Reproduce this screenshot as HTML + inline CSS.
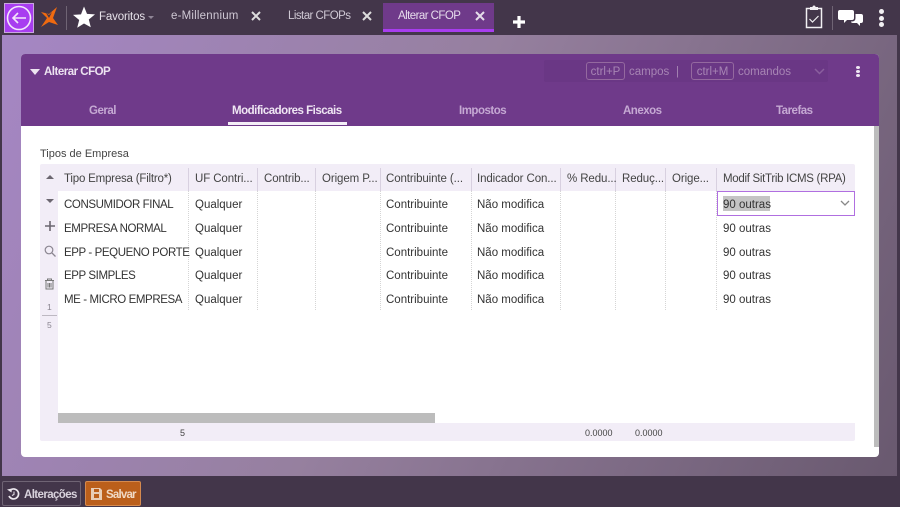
<!DOCTYPE html>
<html><head><meta charset="utf-8">
<style>
html,body{margin:0;padding:0;width:900px;height:507px;overflow:hidden;background:#43364a}
*{box-sizing:border-box}
body{font-family:"Liberation Sans",sans-serif;font-size:11.5px;color:#333;position:relative}
.a{position:absolute;white-space:nowrap}
.bg{position:absolute;left:2px;top:35px;width:895px;height:441px;background:linear-gradient(115deg,#a586c4 0%,#96809f 45%,#69596f 100%)}
.tab{color:#cfc8d4;font-size:11.5px;letter-spacing:-.55px;margin-top:1px}
.nav{color:#c5a9d3;font-weight:bold;font-size:11.5px;letter-spacing:-.5px;margin-top:1px}
.h{color:#444;font-size:11.5px;letter-spacing:-.1px;margin-top:1px}
.c{color:#333;font-size:11.5px;margin-top:1px}
.u{color:#333;font-size:11.5px;letter-spacing:-.4px;margin-top:1px}
.sep{position:absolute;top:168px;height:23px;width:1px;background:#d8d0e0}
.dot{position:absolute;top:191px;height:119px;width:0;border-left:1px dotted #d5d5d5}
.key{position:absolute;top:62px;height:18px;border:1px solid #94699f;border-radius:3px;color:#a785b4;font-size:11.5px;line-height:18px;text-align:center}
</style></head><body>
<div class="bg"></div>

<!-- top bar -->
<div class="a" style="left:4px;top:3px;width:30px;height:30px;background:#a83df0;border:1px solid #c9a6e0"></div>
<svg class="a" style="left:4px;top:3px" width="30" height="30" viewBox="0 0 30 30"><circle cx="15" cy="15" r="11.5" fill="none" stroke="#f3e6fb" stroke-width="1.6"/><path d="M22 15H9M14 10l-5 5 5 5" fill="none" stroke="#f3e6fb" stroke-width="1.6"/></svg>
<svg class="a" style="left:40px;top:6px" width="19" height="22" viewBox="0 0 19 22"><path d="M17 1 9 8 1 6l6 6-6 9 8-5 9 3-5-7z" fill="#f06a10"/><path d="M6 7 9 9 12 6 9 12z" fill="#43364a"/></svg>
<div class="a" style="left:66px;top:6px;width:1px;height:24px;background:#6f6474"></div>
<svg class="a" style="left:73px;top:6px" width="22" height="22" viewBox="0 0 22 22"><path d="M11 .5l3 7.4 8 .5-6.2 5.1 2 7.8L11 17.500 4.200 21.800l2-7.800L0 8.900l8-.5z" fill="#fff"/></svg>
<div class="a" style="left:99px;top:11px;color:#e6e1e9;font-size:11.5px;letter-spacing:-.15px">Favoritos</div>
<div class="a" style="left:148px;top:16px;width:0;height:0;border:3px solid transparent;border-top-color:#8f8596"></div>
<div class="a tab" style="left:171px;top:9px;letter-spacing:.2px">e-Millennium</div>
<div class="a" style="left:383px;top:3px;width:111px;height:29px;background:#6f3a8a;border-bottom:3px solid #a83df0"></div>
<div class="a tab" style="left:288px;top:9px">Listar CFOPs</div>
<div class="a tab" style="left:398px;top:9px;color:#e6dcec">Alterar CFOP</div>
<svg class="a" style="left:251px;top:11px" width="10" height="10"><path d="M1 1l8 8M9 1l-8 8" stroke="#ddd" stroke-width="2"/></svg>
<svg class="a" style="left:362px;top:11px" width="10" height="10"><path d="M1 1l8 8M9 1l-8 8" stroke="#ddd" stroke-width="2"/></svg>
<svg class="a" style="left:475px;top:11px" width="10" height="10"><path d="M1 1l8 8M9 1l-8 8" stroke="#e5dcea" stroke-width="2"/></svg>
<svg class="a" style="left:512px;top:15px" width="14" height="14"><path d="M7 1v12M1 7h12" stroke="#fff" stroke-width="3.200"/></svg>
<svg class="a" style="left:805px;top:5px" width="18" height="24" viewBox="0 0 18 24"><rect x="1.500" y="3.500" width="15" height="19" fill="none" stroke="#f2f0f3" stroke-width="1.500"/><rect x="5" y="2" width="8" height="3" fill="#f2f0f3"/><circle cx="9" cy="2" r="1.500" fill="#f2f0f3"/><path d="M4.500 14l3 3 6-6" fill="none" stroke="#f2f0f3" stroke-width="1.200"/></svg>
<div class="a" style="left:832px;top:6px;width:1px;height:24px;background:#6f6474"></div>
<svg class="a" style="left:838px;top:9px" width="25" height="18" viewBox="0 0 25 18"><path d="M2 1h12q2 0 2 2v6q0 2-2 2H9l-3 3v-3H2q-2 0-2-2V3q0-2 2-2z" fill="#fff"/><path d="M17.500 5H23q2 0 2 2v5q0 2-2 2h-1v3l-3-3h-4q-2 0-2-1.500h1q3.500 0 3.500-3.500z" fill="#fff"/></svg>
<div class="a" style="left:879px;top:9px;width:5px;height:5px;border-radius:50%;background:#f2f0f3"></div>
<div class="a" style="left:879px;top:16px;width:5px;height:5px;border-radius:50%;background:#f2f0f3"></div>
<div class="a" style="left:879px;top:22px;width:5px;height:5px;border-radius:50%;background:#f2f0f3"></div>

<!-- card -->
<div class="a" style="left:21px;top:54px;width:858px;height:403px;background:#fff;border-radius:4px;overflow:hidden">
  <div style="height:72px;background:#6f3a8a"></div>
  <div class="a" style="left:853px;top:72px;width:5px;height:321px;background:#bcbcbc"></div>
</div>
<div class="a" style="left:30px;top:69px;width:0;height:0;border:5px solid transparent;border-top:6px solid #ede4f1;border-bottom:0"></div>
<div class="a" style="left:44px;top:66px;color:#ece3f0;font-weight:bold;font-size:11.500px;letter-spacing:-.5px">Alterar CFOP</div>

<div class="a" style="left:544px;top:60px;width:284px;height:22px;background:#6a3785;border-radius:2px"></div>
<div class="key" style="left:586px;width:39px">ctrl+P</div>
<div class="a" style="left:629px;top:66px;color:#a785b4;font-size:11.500px">campos</div>
<div class="a" style="left:676px;top:66px;color:#a785b4;font-size:11.500px">|</div>
<div class="key" style="left:691px;width:43px">ctrl+M</div>
<div class="a" style="left:738px;top:66px;color:#a785b4;font-size:11.500px">comandos</div>
<svg class="a" style="left:814px;top:68px" width="11" height="7"><path d="M1 1l4.500 4.500L10 1" fill="none" stroke="#8a5f9e" stroke-width="1.500"/></svg>
<div class="a" style="left:856px;top:66px;width:4px;height:3px;background:#f0e8f4;border-radius:50%"></div>
<div class="a" style="left:856px;top:70px;width:4px;height:3px;background:#f0e8f4;border-radius:50%"></div>
<div class="a" style="left:856px;top:74px;width:4px;height:3px;background:#f0e8f4;border-radius:50%"></div>

<div class="a nav" style="left:89px;top:104px">Geral</div>
<div class="a nav" style="left:232px;top:104px;color:#efe6f3">Modificadores Fiscais</div>
<div class="a" style="left:228px;top:122px;width:119px;height:3px;background:#f4eef7"></div>
<div class="a nav" style="left:459px;top:104px">Impostos</div>
<div class="a nav" style="left:623px;top:104px">Anexos</div>
<div class="a nav" style="left:776px;top:104px">Tarefas</div>

<div class="a" style="left:40px;top:148px;color:#444;font-size:11px">Tipos de Empresa</div>

<!-- grid -->
<div class="a" style="left:40px;top:164px;width:815px;height:277px;background:#f2edf7;border-radius:2px"></div>
<div class="a" style="left:58px;top:191px;width:797px;height:232px;background:#fff"></div>
<div class="a" style="left:58px;top:413px;width:377px;height:10px;background:#bcbcbc"></div>

<div class="sep" style="left:188px"></div><div class="sep" style="left:257px"></div><div class="sep" style="left:315px"></div><div class="sep" style="left:380px"></div><div class="sep" style="left:471px"></div><div class="sep" style="left:560px"></div><div class="sep" style="left:615px"></div><div class="sep" style="left:665px"></div><div class="sep" style="left:716px"></div>
<div class="dot" style="left:188px"></div><div class="dot" style="left:257px"></div><div class="dot" style="left:315px"></div><div class="dot" style="left:380px"></div><div class="dot" style="left:471px"></div><div class="dot" style="left:560px"></div><div class="dot" style="left:615px"></div><div class="dot" style="left:665px"></div><div class="dot" style="left:716px"></div>

<div class="a h" style="left:64px;top:172px;letter-spacing:-.2px">Tipo Empresa (Filtro*)</div>
<div class="a h" style="left:195px;top:172px">UF Contri...</div>
<div class="a h" style="left:264px;top:172px">Contrib...</div>
<div class="a h" style="left:322px;top:172px">Origem P...</div>
<div class="a h" style="left:386px;top:172px">Contribuinte (...</div>
<div class="a h" style="left:477px;top:172px">Indicador Con...</div>
<div class="a h" style="left:567px;top:172px">% Redu...</div>
<div class="a h" style="left:622px;top:172px">Reduç...</div>
<div class="a h" style="left:672px;top:172px">Orige...</div>
<div class="a h" style="left:723px;top:172px;letter-spacing:-.3px">Modif SitTrib ICMS (RPA)</div>

<div class="a u" style="left:64px;top:198px">CONSUMIDOR FINAL</div>
<div class="a u" style="left:64px;top:222px">EMPRESA NORMAL</div>
<div class="a u" style="left:64px;top:246px">EPP - PEQUENO PORTE</div>
<div class="a u" style="left:64px;top:269px">EPP SIMPLES</div>
<div class="a u" style="left:64px;top:293px">ME - MICRO EMPRESA</div>

<div class="a c" style="left:195px;top:198px">Qualquer</div><div class="a c" style="left:195px;top:222px">Qualquer</div><div class="a c" style="left:195px;top:246px">Qualquer</div><div class="a c" style="left:195px;top:269px">Qualquer</div><div class="a c" style="left:195px;top:293px">Qualquer</div>
<div class="a c" style="left:386px;top:198px">Contribuinte</div><div class="a c" style="left:386px;top:222px">Contribuinte</div><div class="a c" style="left:386px;top:246px">Contribuinte</div><div class="a c" style="left:386px;top:269px">Contribuinte</div><div class="a c" style="left:386px;top:293px">Contribuinte</div>
<div class="a c" style="left:477px;top:198px">Não modifica</div><div class="a c" style="left:477px;top:222px">Não modifica</div><div class="a c" style="left:477px;top:246px">Não modifica</div><div class="a c" style="left:477px;top:269px">Não modifica</div><div class="a c" style="left:477px;top:293px">Não modifica</div>

<div class="a" style="left:717px;top:191px;width:138px;height:25px;border:1px solid #b06fe0;background:#fff"></div>
<div class="a" style="left:723px;top:196px;width:47px;height:15px;background:#c4c4c4"></div>
<div class="a c" style="left:723px;top:198px">90 outras</div>
<div class="a c" style="left:723px;top:222px">90 outras</div>
<div class="a c" style="left:723px;top:246px">90 outras</div>
<div class="a c" style="left:723px;top:269px">90 outras</div>
<div class="a c" style="left:723px;top:293px">90 outras</div>
<svg class="a" style="left:840px;top:200px" width="10" height="7"><path d="M1 1l4 4 4-4" fill="none" stroke="#888" stroke-width="1.300"/></svg>

<!-- side tools -->
<div class="a" style="left:46px;top:175px;width:0;height:0;border:4px solid transparent;border-bottom:4px solid #6b6670;border-top:0"></div>
<div class="a" style="left:46px;top:199px;width:0;height:0;border:4px solid transparent;border-top:4px solid #6b6670;border-bottom:0"></div>
<svg class="a" style="left:45px;top:221px" width="10" height="10"><path d="M5 0v10M0 5h10" stroke="#6b6670" stroke-width="1.600"/></svg>
<svg class="a" style="left:44px;top:245px" width="12" height="12"><circle cx="5" cy="5" r="3.800" fill="none" stroke="#8a8590" stroke-width="1.200"/><path d="M8 8l3.500 3.500" stroke="#8a8590" stroke-width="1.300"/></svg>
<svg class="a" style="left:44px;top:278px" width="11" height="12"><path d="M1 2.500h9M3.500 2.500V1h4v1.500M2 3v8h7V3M4 5v4.500M5.500 5v4.500M7 5v4.500" fill="none" stroke="#777" stroke-width="1"/></svg>
<div class="a" style="left:47px;top:302px;color:#8a8590;font-size:8.500px">1</div>
<div class="a" style="left:42px;top:315px;width:15px;height:1px;background:#bdb8c2"></div>
<div class="a" style="left:47px;top:320px;color:#8a8590;font-size:8.500px">5</div>

<!-- footer -->
<div class="a" style="left:180px;top:428px;color:#444;font-size:9px">5</div>
<div class="a" style="left:585px;top:428px;color:#444;font-size:9px">0.0000</div>
<div class="a" style="left:635px;top:428px;color:#444;font-size:9px">0.0000</div>

<!-- bottom buttons -->
<div class="a" style="left:2px;top:481px;width:79px;height:25px;border:1px solid #6f6474;border-radius:2px"></div>
<svg class="a" style="left:7px;top:488px" width="13" height="12" viewBox="0 0 13 12"><path d="M2.500 3a5 5 0 1 1-.5 5" fill="none" stroke="#ece8ee" stroke-width="1.700"/><path d="M0 1.500l4.500 3 .5-4z" fill="#ece8ee"/><path d="M7 3.500V6.500l-2 1" fill="none" stroke="#ece8ee" stroke-width="1"/></svg>
<div class="a" style="left:24px;top:489px;color:#d8d2dc;font-size:11.500px;font-weight:bold;letter-spacing:-.6px">Alterações</div>
<div class="a" style="left:85px;top:481px;width:56px;height:25px;background:#bb5f1b;border:1px solid #d58a4f;border-radius:2px"></div>
<svg class="a" style="left:91px;top:488px" width="11" height="12"><path d="M0 0h9l2 2v10H0z" fill="#e8cdb6"/><rect x="3" y="1" width="5" height="3" fill="#bb5f1b"/><rect x="3" y="6" width="5" height="4" fill="#bb5f1b"/></svg>
<div class="a" style="left:106px;top:489px;color:#f0d9c5;font-size:11.500px;font-weight:bold;letter-spacing:-.8px">Salvar</div>
</body></html>
